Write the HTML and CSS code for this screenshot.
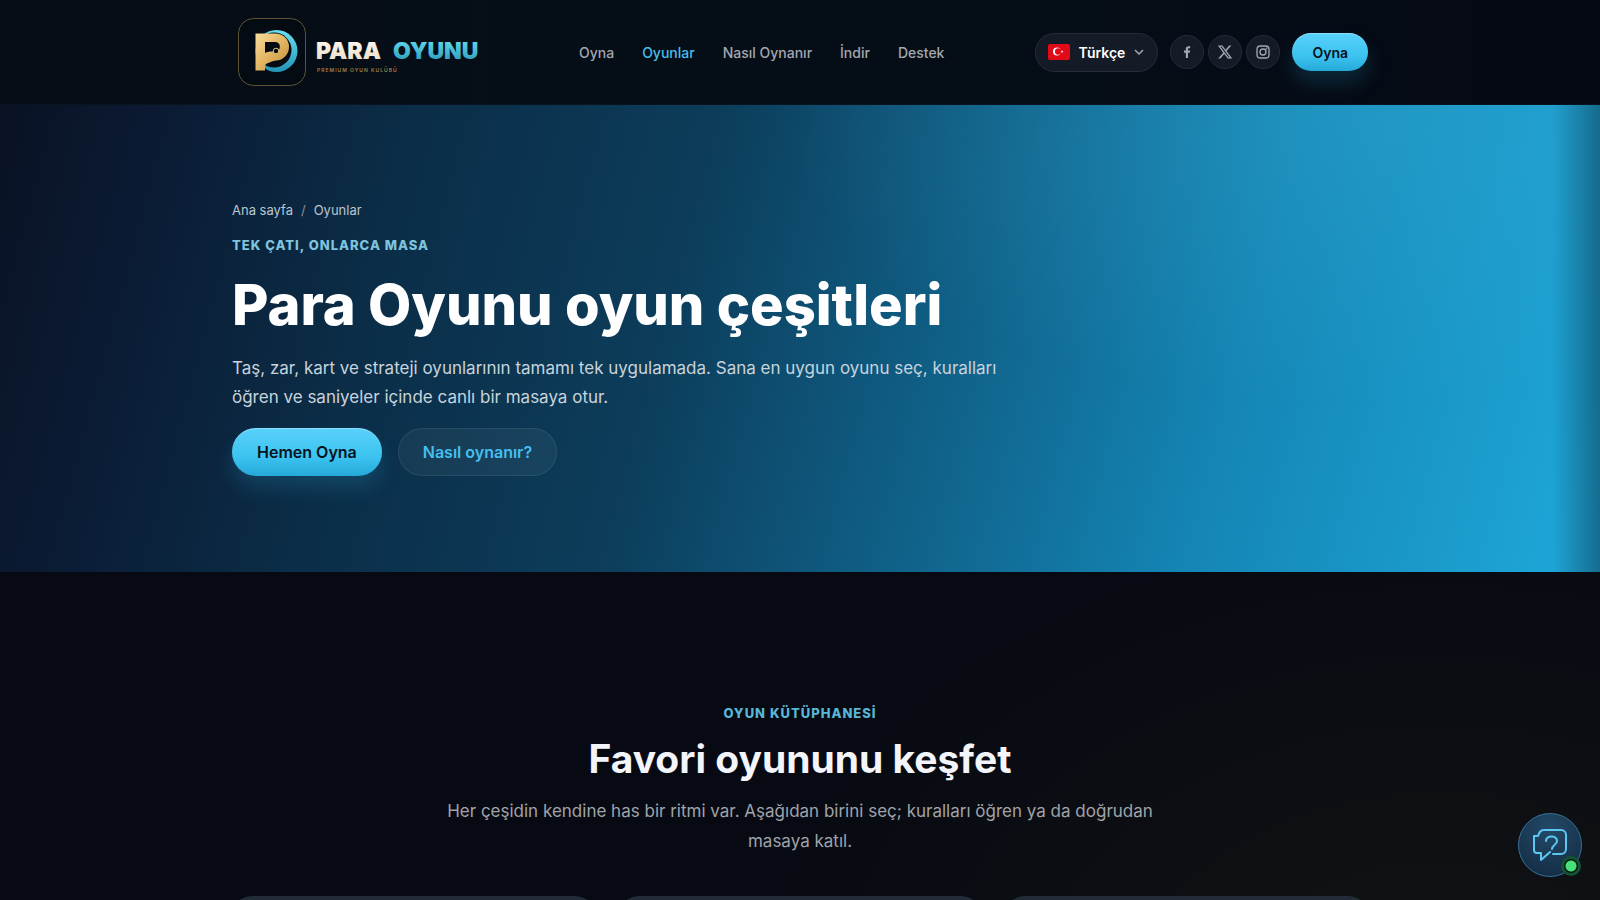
FILE: index.html
```html
<!DOCTYPE html>
<html lang="tr">
<head>
    <meta charset="UTF-8">
    <meta name="viewport" content="width=device-width, initial-scale=1">
    <title>Para Oyunu - Oyunlar</title>
    <link rel="stylesheet" href="styles.css">
</head>
<body>
    <header class="site-header">
        <div class="container header-inner">
            <a class="logo" href="#" aria-label="Para Oyunu">
                <svg width="256" height="72" viewBox="0 0 256 72">
                    <defs>
                        <linearGradient id="gold" x1="0" y1="0" x2="1" y2="1">
                            <stop offset="0" stop-color="#f9dc9c"/>
                            <stop offset="0.5" stop-color="#e2b562"/>
                            <stop offset="1" stop-color="#c08a35"/>
                        </linearGradient>
                        <linearGradient id="cyan" x1="0" y1="0" x2="0" y2="1">
                            <stop offset="0" stop-color="#68e0f0"/>
                            <stop offset="1" stop-color="#2494b8"/>
                        </linearGradient>
                        <linearGradient id="cream" x1="0" y1="0" x2="0" y2="1">
                            <stop offset="0" stop-color="#fffaf0"/>
                            <stop offset="1" stop-color="#ead9c4"/>
                        </linearGradient>
                    </defs>
                    <rect x="6.5" y="2.5" width="67" height="67" rx="15" fill="#050b12" stroke="#5f5534"/>
                    <circle cx="44.5" cy="35" r="21" fill="url(#cyan)"/>
                    <circle cx="42" cy="34" r="17.5" fill="#050b12"/>
                    <path fill="url(#gold)" fill-rule="evenodd" d="M23.500 17.500H43a13.500 13.500 0 0 1 1 27C39 45.500 35 47 33 49v5.500h-9.500zM33 26v11c2-1 4-1.500 7-1.500h3a4.800 4.800 0 0 0 1-9.500z"/>
                    <circle cx="44" cy="35" r="2.800" fill="#050b12" stroke="#e9c478" stroke-width="1"/>
                    <text class="logo-name" x="84" y="43" fill="url(#cream)">PARA</text>
                    <text class="logo-name" x="161" y="43" fill="url(#cyan)">OYUNU</text>
                    <text class="logo-tag" x="85" y="56">PREMIUM OYUN KULÜBÜ</text>
                </svg>
            </a>
            <nav class="main-nav">
                <a href="#">Oyna</a>
                <a href="#" class="active">Oyunlar</a>
                <a href="#">Nasıl Oynanır</a>
                <a href="#">İndir</a>
                <a href="#">Destek</a>
            </nav>
            <div class="header-actions">
                <div class="lang">
                    <svg class="flag" width="22" height="16" viewBox="0 0 22 16" aria-hidden="true">
                        <rect width="22" height="16" rx="2" fill="#e30a17"/>
                        <circle cx="9" cy="7.500" r="4" fill="#fff"/>
                        <circle cx="10.200" cy="7.500" r="3.200" fill="#e30a17"/>
                        <path d="M14 6.200l.4.900 1 .1-.8.600.2 1-.8-.500-.9.500.3-1-.8-.600 1-.1z" fill="#fff"/>
                    </svg>
                    <select aria-label="Dil">
                        <option>Türkçe</option>
                        <option>English</option>
                    </select>
                    <svg class="chevron" width="10" height="6" viewBox="0 0 10 6" aria-hidden="true">
                        <path d="M1 1l4 4 4-4"/>
                    </svg>
                </div>
                <div class="social">
                    <a href="#" aria-label="Facebook">
                        <svg width="16" height="16" viewBox="0 0 24 24"><path fill="currentColor" d="M13.500 21v-8h2.800l.4-3.200h-3.200V7.900c0-.9.300-1.600 1.600-1.600h1.700V3.400c-.3 0-1.300-.1-2.500-.1-2.500 0-4.100 1.500-4.100 4.200v2.300H7.400V13h2.800v8z"/></svg>
                    </a>
                    <a href="#" aria-label="X">
                        <svg width="16" height="16" viewBox="0 0 24 24"><path fill="currentColor" d="M18.200 2.300h3.300l-7.200 8.200 8.500 11.300h-6.700l-5.200-6.900-6 6.900H1.700l7.700-8.800L1.300 2.300h6.800l4.700 6.200zm-1.100 17.500h1.800L7.100 4.100H5.100z"/></svg>
                    </a>
                    <a href="#" aria-label="Instagram">
                        <svg width="16" height="16" viewBox="0 0 24 24" fill="none" stroke="currentColor" stroke-width="2">
                            <rect x="3" y="3" width="18" height="18" rx="5"/>
                            <circle cx="12" cy="12" r="4.500"/>
                            <circle cx="17.200" cy="6.800" r=".5"/>
                        </svg>
                    </a>
                </div>
                <button class="btn btn-primary btn-small">Oyna</button>
            </div>
        </div>
    </header>

    <main>
        <section class="hero">
            <div class="container">
                <nav class="breadcrumb">
                    <a href="#">Ana sayfa</a>
                    <span class="sep">/</span>
                    <span>Oyunlar</span>
                </nav>
                <p class="eyebrow">TEK ÇATI, ONLARCA MASA</p>
                <h1>Para Oyunu oyun çeşitleri</h1>
                <p class="lead">Taş, zar, kart ve strateji oyunlarının tamamı tek uygulamada. Sana en uygun oyunu seç, kuralları öğren ve saniyeler içinde canlı bir masaya otur.</p>
                <div class="hero-buttons">
                    <button class="btn btn-primary">Hemen Oyna</button>
                    <button class="btn btn-ghost">Nasıl oynanır?</button>
                </div>
            </div>
        </section>

        <section class="library">
            <div class="container">
                <div class="section-head">
                    <p class="eyebrow">OYUN KÜTÜPHANESİ</p>
                    <h2>Favori oyununu keşfet</h2>
                    <p class="section-text">Her çeşidin kendine has bir ritmi var. Aşağıdan birini seç; kuralları öğren ya da doğrudan masaya katıl.</p>
                </div>
                <div class="cards">
                    <article class="card"></article>
                    <article class="card"></article>
                    <article class="card"></article>
                </div>
            </div>
        </section>
    </main>

    <button class="chat" aria-label="Destek">
        <svg width="36" height="36" viewBox="0 0 36 36" fill="none" stroke="#5cc8f2" stroke-width="2" stroke-linejoin="round" stroke-linecap="round">
            <path d="M21 27h8a5 5 0 0 0 5-5V8a5 5 0 0 0-5-5H12c-4 0-5 3-6 6H2v14c0 2 1 3 3 3h4v7l9-8"/>
            <path d="M14 14c0-6 11-6 11 0 0 4-5 4-5 8"/>
        </svg>
        <span class="status"></span>
    </button>
</body>
</html>
```
FILE: styles.css
```css
* {
    box-sizing: border-box;
}

body {
    margin: 0;
    font-family: Inter, "Open Sans", sans-serif;
    color: #f3f5fa;
    background: #070a12;
}

h1, h2, p {
    margin: 0;
}

a {
    color: inherit;
    text-decoration: none;
}

.container {
    max-width: 1184px;
    margin: 0 auto;
    padding: 0 24px;
}

/* header */
.site-header {
    background: linear-gradient(90deg, #060d16, #050e17 60%, #050914);
    border-bottom: 1px solid #0a1420;
}

.header-inner {
    display: flex;
    align-items: center;
    justify-content: space-between;
    min-height: 104px;
}

.logo svg {
    display: block;
}

.logo-name {
    font-size: 23px;
    font-weight: 900;
}

.logo-tag {
    font-size: 5px;
    font-weight: 600;
    letter-spacing: 1px;
    fill: #a08044;
}

.main-nav {
    display: flex;
    gap: 28px;
    font-size: 14px;
    font-weight: 500;
    color: #a2a7af;
}

.main-nav .active {
    color: #45bfe8;
}

.header-actions {
    display: flex;
    align-items: center;
    gap: 12px;
}

.lang {
    display: flex;
    align-items: center;
    gap: 8px;
    height: 39px;
    padding: 0 13px 0 12px;
    border: 1px solid #252d39;
    border-radius: 20px;
    background: #141a26;
}

.lang select {
    appearance: none;
    width: 48px;
    padding: 0;
    border: 0;
    background: none;
    color: #fff;
    font: 600 14px Inter, sans-serif;
}

.chevron path {
    fill: none;
    stroke: #a2a7af;
    stroke-width: 1.5;
}

.social {
    display: flex;
    gap: 4px;
}

.social a {
    display: flex;
    align-items: center;
    justify-content: center;
    width: 34px;
    height: 34px;
    border: 1px solid #252d39;
    border-radius: 50%;
    background: #141a26;
    color: #a2a7af;
}

.btn {
    height: 48px;
    padding: 0 25px;
    border: 1px solid transparent;
    border-radius: 24px;
    font: 600 16px Inter, sans-serif;
    cursor: pointer;
}

.btn-primary {
    border: 0;
    color: #06121c;
    background: linear-gradient(180deg, #59d1fb, #3cc3f0 60%, #25a9da);
    box-shadow: 0 12px 20px rgba(56, 190, 240, 0.16), inset 0 1px 0 rgba(255, 255, 255, 0.3);
}

.btn-ghost {
    padding: 0 24px;
    color: #45bfee;
    border-color: rgba(255, 255, 255, 0.08);
    background: rgba(255, 255, 255, 0.05);
}

.btn-small {
    height: 38px;
    padding: 0 20px;
    font-size: 14px;
}

/* hero */
.hero {
    padding: 96px 0;
    background:
        linear-gradient(90deg, transparent calc(100% - 48px), rgba(10, 50, 70, 0.5)),
        radial-gradient(ellipse 560px 300px at 84% 0, rgba(60, 180, 220, 0.3), transparent),
        linear-gradient(105deg, #0a1224 0%, #0b1b34 10%, #0b2d47 24%, #0c3d5b 42%, #10638b 60%, #1486b5 76%, #1ea6d8 98%);
}

.breadcrumb {
    display: flex;
    gap: 8px;
    font-size: 13px;
    line-height: 18px;
    color: #bac5d0;
}

.breadcrumb .sep {
    color: #8594a3;
}

.eyebrow {
    font-size: 13px;
    font-weight: 800;
    line-height: 20px;
    letter-spacing: 1px;
    color: #58b6d6;
}

.hero .eyebrow {
    margin-top: 16px;
    color: #7ec4de;
}

h1 {
    margin-top: 16px;
    font-size: 56px;
    font-weight: 800;
    line-height: 68px;
    color: #fff;
}

.lead {
    max-width: 800px;
    margin-top: 15px;
    font-size: 17px;
    line-height: 29px;
    color: #c8d3dc;
}

.hero-buttons {
    display: flex;
    gap: 16px;
    margin-top: 16px;
}

/* game library */
.library {
    padding: 131px 0 96px;
    background: radial-gradient(ellipse 700px 500px at 90% 60%, #121314, transparent);
}

.section-head {
    max-width: 740px;
    margin: 0 auto;
    text-align: center;
}

h2 {
    margin-top: 10px;
    font-size: 39px;
    font-weight: 700;
    line-height: 52px;
}

.section-text {
    margin-top: 11px;
    font-size: 17px;
    line-height: 30px;
    color: #a0a3a9;
}

.cards {
    display: grid;
    grid-template-columns: repeat(3, 1fr);
    gap: 24px;
    margin-top: 40px;
}

.card {
    min-height: 320px;
    border-radius: 20px;
    background: #222c39;
}

.chat {
    position: fixed;
    right: 18px;
    bottom: 23px;
    display: flex;
    align-items: center;
    justify-content: center;
    width: 64px;
    height: 64px;
    border: 1px solid #34739a;
    border-radius: 50%;
    background: radial-gradient(circle at 50% 25%, #234a68, #12283f);
}

.status {
    position: absolute;
    right: 0;
    bottom: 0;
    width: 20px;
    height: 20px;
    border: 3px solid #145436;
    border-radius: 50%;
    background: radial-gradient(circle, #48e078 5px, #07150f 6px);
}
```
